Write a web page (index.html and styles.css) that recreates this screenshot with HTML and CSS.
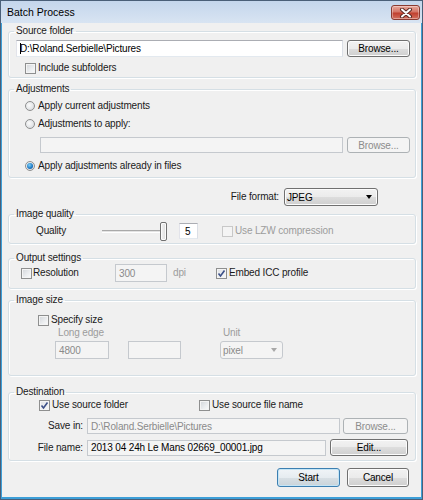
FILE: index.html
```html
<!DOCTYPE html>
<html>
<head>
<meta charset="utf-8">
<link rel="stylesheet" href="styles.css">
</head>
<body>
<div class="window">
  <div class="titlebar">
    <span class="title">Batch Process</span>
    <div class="close">
      <svg width="14" height="10" viewBox="0 0 14 10">
        <path d="M3 1.5 L11 8.5 M11 1.5 L3 8.5" stroke="#5a2a24" stroke-width="4" stroke-linecap="round"/>
        <path d="M3 1.5 L11 8.5 M11 1.5 L3 8.5" stroke="#ffffff" stroke-width="2" stroke-linecap="round"/>
      </svg>
    </div>
  </div>
  <div class="client">
    <fieldset class="group g-source">
      <legend>Source folder</legend>
      <div class="row r-src">
        <div class="input w-src"><span class="caret"></span>D:\Roland.Serbielle\Pictures</div>
        <button type="button" class="btn w-browse">Browse...</button>
      </div>
      <div class="row r-inc">
        <span class="check"></span><span class="lbl">Include subfolders</span>
      </div>
    </fieldset>

    <fieldset class="group g-adj">
      <legend>Adjustments</legend>
      <div class="row r-radio r-radio1">
        <span class="radio"></span><span class="lbl">Apply current adjustments</span>
      </div>
      <div class="row r-radio r-radio2">
        <span class="radio"></span><span class="lbl">Adjustments to apply:</span>
      </div>
      <div class="row r-adjin">
        <div class="input disabled w-adj"></div>
        <button type="button" class="btn disabled w-browse">Browse...</button>
      </div>
      <div class="row r-radio r-radio3">
        <span class="radio on"><span class="dot"></span></span><span class="lbl">Apply adjustments already in files</span>
      </div>
    </fieldset>

    <div class="row r-format">
      <span class="lbl">File format:</span>
      <div class="select w-format"><span>JPEG</span><span class="arrow"></span></div>
    </div>

    <fieldset class="group g-quality">
      <legend>Image quality</legend>
      <div class="row r-quality">
        <span class="lbl q-label">Quality</span>
        <div class="slider"><div class="track"></div><div class="thumb"></div></div>
        <div class="input numbox">5</div>
        <span class="check disabled lzw"></span><span class="lbl dim">Use LZW compression</span>
      </div>
    </fieldset>

    <fieldset class="group g-output">
      <legend>Output settings</legend>
      <div class="row r-output">
        <div class="res">
          <span class="check"></span><span class="lbl res-lbl">Resolution</span>
        </div>
        <div class="input disabled w-dpi">300</div>
        <span class="lbl dim dpi">dpi</span>
        <span class="check checked">
          <svg width="9" height="9" viewBox="0 0 9 9"><path d="M1.5 4.5 L3.5 7 L7.5 1.5" fill="none" stroke="#3c5088" stroke-width="1.6"/></svg>
        </span><span class="lbl">Embed ICC profile</span>
      </div>
    </fieldset>

    <fieldset class="group g-size">
      <legend>Image size</legend>
      <div class="row r-spec">
        <span class="check"></span><span class="lbl">Specify size</span>
      </div>
      <div class="size-grid">
        <span class="lbl dim gl">Long edge</span>
        <span></span>
        <span class="lbl dim gl">Unit</span>
        <div class="input disabled w-long">4800</div>
        <div class="input disabled w-short"></div>
        <div class="select disabled w-unit"><span>pixel</span><span class="arrow"></span></div>
      </div>
    </fieldset>

    <fieldset class="group g-dest">
      <legend>Destination</legend>
      <div class="row r-destcheck">
        <div class="usefolder">
          <span class="check checked">
            <svg width="9" height="9" viewBox="0 0 9 9"><path d="M1.5 4.5 L3.5 7 L7.5 1.5" fill="none" stroke="#3c5088" stroke-width="1.6"/></svg>
          </span><span class="lbl">Use source folder</span>
        </div>
        <span class="check"></span><span class="lbl">Use source file name</span>
      </div>
      <div class="row r-savein">
        <span class="lbl flabel">Save in:</span>
        <div class="input disabled w-savein">D:\Roland.Serbielle\Pictures</div>
        <button type="button" class="btn disabled w-browse2">Browse...</button>
      </div>
      <div class="row r-fname">
        <span class="lbl flabel">File name:</span>
        <div class="input readonly w-fname">2013 04 24h Le Mans 02669_00001.jpg</div>
        <button type="button" class="btn w-edit">Edit...</button>
      </div>
    </fieldset>

    <div class="row r-buttons">
      <button type="button" class="btn default w-start">Start</button>
      <button type="button" class="btn w-cancel">Cancel</button>
    </div>
  </div>
</div>
</body>
</html>
```

FILE: styles.css
```css
* { box-sizing: border-box; }
html, body { margin: 0; padding: 0; }
body {
  width: 423px;
  height: 500px;
  overflow: hidden;
  font-family: "Liberation Sans", Arial, sans-serif;
  font-size: 10px;
  letter-spacing: -0.15px;
  color: #1a1a1a;
  background: #ffffff;
}

.window {
  width: 423px;
  height: 500px;
  border: 1px solid #4a5f78;
  background: #3d9fd8;
  display: flex;
  flex-direction: column;
}

.titlebar {
  height: 22px;
  flex: none;
  background: linear-gradient(#c4d6ec, #d8e4f2);
  display: flex;
  align-items: center;
  justify-content: space-between;
  padding: 0 2px 0 6px;
}
.title {
  font-size: 10.5px;
  letter-spacing: 0;
  color: #000;
}
.close {
  width: 29px;
  height: 15px;
  margin-top: 1px;
  border: 1px solid #8a3a30;
  border-radius: 3px;
  background: linear-gradient(#e8a89c 0%, #d47566 45%, #c0402f 55%, #d3705f 100%);
  box-shadow: inset 0 0 0 1px rgba(255,255,255,0.35);
  display: flex;
  align-items: center;
  justify-content: center;
}

.client {
  flex: 1;
  margin: 0 1px 2px 1px;
  background: #f0f0f0;
  display: flex;
  flex-direction: column;
}

.row { display: flex; align-items: center; }
.lbl { white-space: nowrap; line-height: 12px; }
.dim { color: #9c9c9c; }

/* group boxes */
.group {
  margin: 0 5px 0 6px;
  padding: 0;
  border: 1px solid #d5dfe5;
  border-radius: 3px;
  box-shadow: inset 1px 1px 0 #ffffff, 1px 1px 0 #ffffff;
  min-width: 0;
  flex: none;
}
.group legend {
  padding: 0 2px;
  margin-left: 5px;
  line-height: 12px;
  height: 12px;
  color: #1a1a1a;
}

.g-source { margin-top: 2px; height: 53px; }
.g-adj { margin-top: 5px; height: 95px; }
.g-quality { margin-top: 2px; height: 36px; }
.g-output { margin-top: 8px; height: 37px; }
.g-size { margin-top: 5px; height: 82px; }
.g-dest { margin-top: 10px; height: 75px; }

/* inputs */
.input {
  height: 17px;
  background: #ffffff;
  border: 1px solid;
  border-color: #abadb3 #dbdfe6 #e3e9ef #e2e3ea;
  padding-left: 3px;
  display: flex;
  align-items: center;
  white-space: nowrap;
  overflow: hidden;
  color: #000;
}
.input.disabled {
  background: #f4f4f4;
  border-color: #c5c9ce;
  color: #8a8a8a;
}
.input.readonly {
  background: #f4f4f4;
  border-color: #c5c9ce;
  color: #000;
}
.caret {
  width: 1px;
  height: 11px;
  background: #000;
  margin-right: -1px;
  flex: none;
}

/* buttons */
.btn {
  font: inherit;
  letter-spacing: inherit;
  color: #000;
  height: 17px;
  padding: 0;
  border: 1px solid #707070;
  border-radius: 3px;
  background: linear-gradient(#f2f2f2 0%, #ebebeb 50%, #dddddd 50%, #cfcfcf 100%);
  box-shadow: inset 0 0 0 1px #fcfcfc;
  display: flex;
  align-items: center;
  justify-content: center;
  flex: none;
}
.btn.disabled {
  border-color: #adb2b5;
  background: #f4f4f4;
  box-shadow: none;
  color: #8c8c8c;
}
.btn.default {
  border-color: #3c7fb1;
  box-shadow: inset 0 0 0 1px #c4e5f6;
  background: linear-gradient(#f0f4f7 0%, #e6ecf0 50%, #d8e0e5 50%, #cad3d9 100%);
}

/* select */
.select {
  height: 18px;
  border: 1px solid #707070;
  border-radius: 3px;
  background: linear-gradient(#f2f2f2 0%, #ebebeb 50%, #dddddd 50%, #cfcfcf 100%);
  box-shadow: inset 0 0 0 1px #fcfcfc;
  display: flex;
  align-items: center;
  justify-content: space-between;
  padding: 0 5px 0 2px;
  color: #000;
}
.select .arrow {
  width: 0;
  height: 0;
  border-left: 3.5px solid transparent;
  border-right: 3.5px solid transparent;
  border-top: 4px solid #000;
}
.select.disabled {
  border-color: #c5c9ce;
  background: #f4f4f4;
  box-shadow: none;
  color: #8a8a8a;
}
.select.disabled .arrow { border-top-color: #a8a8a8; }

/* check / radio */
.check {
  width: 11px;
  height: 11px;
  flex: none;
  border: 1px solid #8e8f8f;
  background: linear-gradient(135deg, #d2d5d9 0%, #eceef0 60%, #fbfbfb 100%);
  box-shadow: inset 0 0 0 1px #f4f4f4;
  margin-right: 2px;
  display: flex;
  align-items: center;
  justify-content: center;
}
.check.disabled {
  border-color: #c8c8c8;
  background: #f4f4f4;
  box-shadow: none;
}
.check.checked { background: linear-gradient(135deg, #dfe2e6, #f8f8f8); }

.radio {
  width: 10px;
  height: 10px;
  flex: none;
  border: 1px solid #8e8f8f;
  border-radius: 50%;
  background: radial-gradient(circle at 40% 40%, #fbfbfb 0%, #e6e8ea 50%, #cfd2d6 100%);
  margin-right: 3px;
  display: flex;
  align-items: center;
  justify-content: center;
}
.radio .dot {
  width: 6px;
  height: 6px;
  border-radius: 50%;
  background: radial-gradient(circle at 40% 35%, #7fd0f7 0%, #1b77c3 60%, #0d4f8f 100%);
}

/* source group */
.r-src { margin: 3px 0 0 7px; gap: 4px; height: 17px; }
.w-src { width: 327px; }
.w-browse { width: 63px; }
.r-inc { margin: 5px 0 0 16px; height: 12px; }

/* adjustments */
.r-radio { margin-left: 16px; height: 12px; }
.r-radio1 { margin-top: 5px; }
.r-radio2 { margin-top: 6px; }
.r-radio3 { margin-top: 7px; }
.r-adjin { margin: 7px 0 0 31px; gap: 4px; height: 16px; }
.r-adjin .input, .r-adjin .btn { height: 16px; }
.w-adj { width: 303px; }

/* file format */
.r-format {
  margin-top: 10px;
  height: 18px;
  justify-content: flex-end;
  padding-right: 43px;
  gap: 5px;
  flex: none;
}
.w-format { width: 94px; }

/* quality */
.r-quality { margin-top: 1px; height: 20px; }
.q-label { margin-left: 27px; width: 66px; }
.slider {
  width: 65px;
  height: 20px;
  display: flex;
  align-items: center;
}
.track {
  flex: 1;
  height: 3px;
  border-top: 1px solid #a9a9a9;
  border-bottom: 1px solid #ffffff;
  background: #e3e3e3;
}
.thumb {
  width: 7px;
  height: 19px;
  border: 1px solid #707070;
  border-radius: 2px;
  background: linear-gradient(90deg, #f4f4f4, #dcdcdc);
  box-shadow: inset 0 0 0 1px #fbfbfb;
}
.numbox {
  width: 19px;
  height: 16px;
  margin-left: 12px;
  padding-left: 5px;
}
.lzw { margin-left: 24px; }

/* output */
.r-output { margin-top: 0; height: 18px; }
.res { width: 94px; margin-left: 12px; display: flex; align-items: center; }
.res-lbl { margin-left: -1px; }
.w-dpi { width: 52px; height: 18px; }
.dpi { width: 49px; padding-left: 6px; }

/* size */
.r-spec { margin: 8px 0 0 29px; height: 12px; }
.size-grid {
  display: grid;
  grid-template-columns: 73px 92px 63px;
  grid-template-rows: 12px 18px;
  row-gap: 2px;
  margin: 1px 0 0 46px;
}
.gl { padding-left: 3px; }
.w-long { width: 54px; height: 18px; }
.w-short { width: 53px; height: 18px; }
.w-unit { width: 63px; }

/* destination */
.r-destcheck { margin: 1px 0 0 30px; height: 12px; }
.usefolder { width: 160px; display: flex; align-items: center; }
.r-savein { margin-top: 7px; height: 16px; }
.r-fname { margin-top: 5px; height: 17px; }
.flabel { width: 74px; text-align: right; margin-right: 4px; }
.w-savein { width: 253px; height: 16px; }
.w-browse2 { width: 65px; height: 16px; margin-left: 3px; }
.w-fname { width: 239px; height: 16px; }
.w-edit { width: 78px; margin-left: 4px; }

/* bottom buttons */
.r-buttons {
  margin-top: 7px;
  height: 19px;
  justify-content: flex-end;
  padding-right: 12px;
  gap: 7px;
  flex: none;
}
.w-start { width: 63px; height: 19px; }
.w-cancel { width: 62px; height: 19px; }
```
